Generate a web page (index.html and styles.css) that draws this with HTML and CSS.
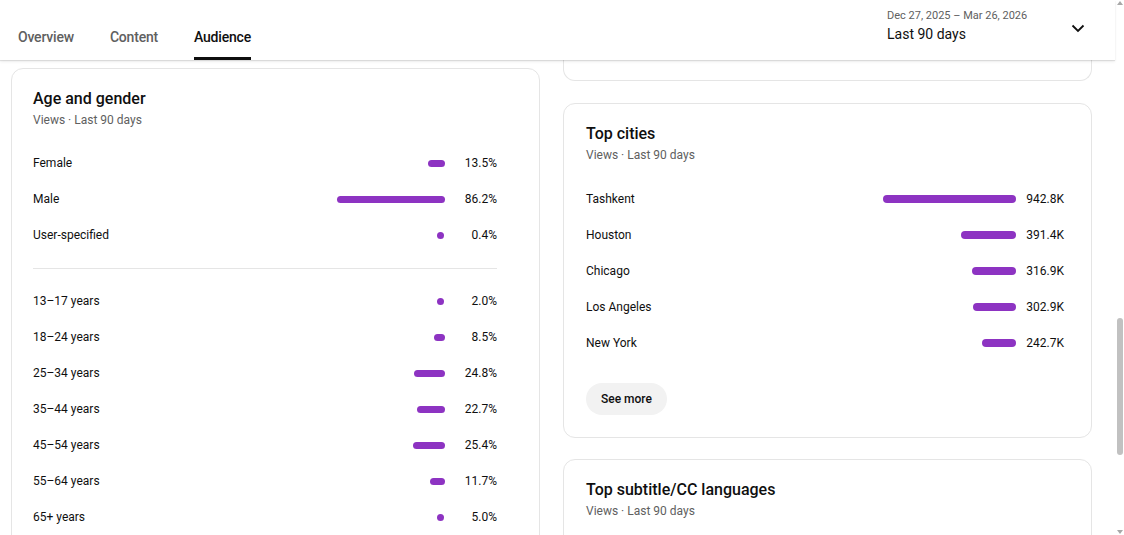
FILE: index.html
```html
<!DOCTYPE html>
<html lang="en">
<head>
<meta charset="utf-8">
<title>Audience</title>
<link rel="stylesheet" href="styles.css">
</head>
<body>
<div class="app">
  <header class="header">
    <nav class="tabs">
      <div class="tab">Overview</div>
      <div class="tab">Content</div>
      <div class="tab active">Audience</div>
    </nav>
    <div class="range">
      <div class="range-text">
        <div class="range-dates">Dec 27, 2025 – Mar 26, 2026</div>
        <div class="range-label">Last 90 days</div>
      </div>
      <svg class="chevron" width="24" height="24" viewBox="0 0 24 24"><path d="M6.5 9.5 12 15l5.5-5.5" fill="none" stroke="#0f0f0f" stroke-width="1.8"/></svg>
    </div>
  </header>

  <main class="main">
    <section class="col">
      <div class="card card-left">
        <h2 class="card-title">Age and gender</h2>
        <div class="card-sub">Views · Last 90 days</div>
        <div class="rows">
          <div class="row"><span class="label">Female</span><span class="bar-wrap"><span class="bar" style="width:17px"></span></span><span class="value">13.5%</span></div>
          <div class="row"><span class="label">Male</span><span class="bar-wrap"><span class="bar" style="width:108px"></span></span><span class="value">86.2%</span></div>
          <div class="row"><span class="label">User-specified</span><span class="bar-wrap"><span class="bar dot"></span></span><span class="value">0.4%</span></div>
        </div>
        <hr class="divider">
        <div class="rows rows-age">
          <div class="row"><span class="label">13–17 years</span><span class="bar-wrap"><span class="bar dot"></span></span><span class="value">2.0%</span></div>
          <div class="row"><span class="label">18–24 years</span><span class="bar-wrap"><span class="bar" style="width:11px"></span></span><span class="value">8.5%</span></div>
          <div class="row"><span class="label">25–34 years</span><span class="bar-wrap"><span class="bar" style="width:31px"></span></span><span class="value">24.8%</span></div>
          <div class="row"><span class="label">35–44 years</span><span class="bar-wrap"><span class="bar" style="width:28px"></span></span><span class="value">22.7%</span></div>
          <div class="row"><span class="label">45–54 years</span><span class="bar-wrap"><span class="bar" style="width:32px"></span></span><span class="value">25.4%</span></div>
          <div class="row"><span class="label">55–64 years</span><span class="bar-wrap"><span class="bar" style="width:15px"></span></span><span class="value">11.7%</span></div>
          <div class="row"><span class="label">65+ years</span><span class="bar-wrap"><span class="bar dot"></span></span><span class="value">5.0%</span></div>
        </div>
      </div>
    </section>

    <section class="col">
      <div class="card-stub"></div>
      <div class="card card-right">
        <h2 class="card-title">Top cities</h2>
        <div class="card-sub">Views · Last 90 days</div>
        <div class="rows rows-cities">
          <div class="row"><span class="label">Tashkent</span><span class="bar-wrap"><span class="bar thick" style="width:133px"></span></span><span class="value value-k">942.8K</span></div>
          <div class="row"><span class="label">Houston</span><span class="bar-wrap"><span class="bar thick" style="width:55px"></span></span><span class="value value-k">391.4K</span></div>
          <div class="row"><span class="label">Chicago</span><span class="bar-wrap"><span class="bar thick" style="width:44px"></span></span><span class="value value-k">316.9K</span></div>
          <div class="row"><span class="label">Los Angeles</span><span class="bar-wrap"><span class="bar thick" style="width:43px"></span></span><span class="value value-k">302.9K</span></div>
          <div class="row"><span class="label">New York</span><span class="bar-wrap"><span class="bar thick" style="width:34px"></span></span><span class="value value-k">242.7K</span></div>
        </div>
        <button class="see-more">See more</button>
      </div>
      <div class="card card-right card-lang">
        <h2 class="card-title">Top subtitle/CC languages</h2>
        <div class="card-sub">Views · Last 90 days</div>
      </div>
    </section>
  </main>

  <div class="scrollbar">
    <span class="arrow-up"></span>
    <span class="thumb"></span>
    <span class="arrow-down"></span>
  </div>
</div>
</body>
</html>
```

FILE: styles.css
```css
* { box-sizing: border-box; }

html, body {
  margin: 0;
  padding: 0;
  background: #fff;
  overflow: hidden;
}

body {
  font-family: Roboto, "Noto Sans", Arial, sans-serif;
  color: #0f0f0f;
}

.app {
  position: relative;
  width: 1124px;
  height: 535px;
  overflow: hidden;
}

/* Header */
.header {
  position: relative;
  z-index: 2;
  width: 1115px;
  height: 60px;
  display: flex;
  justify-content: space-between;
  background: #fff;
  box-shadow: 0 1px 1px rgba(0, 0, 0, 0.10), 0 2px 3px rgba(0, 0, 0, 0.06);
}

.tabs {
  display: flex;
  gap: 36px;
  padding-left: 18px;
}

.tab {
  height: 60px;
  padding-top: 27px;
  border-bottom: 3px solid transparent;
  font-size: 14px;
  line-height: 20px;
  font-weight: 500;
  letter-spacing: -0.2px;
  color: #606060;
}

.tab.active {
  color: #0f0f0f;
  border-bottom-color: #0f0f0f;
}

.range {
  display: flex;
  align-items: flex-start;
  padding-right: 25px;
}

.range-text {
  width: 179px;
  padding-top: 9px;
}

.range-dates {
  font-size: 11px;
  line-height: 14px;
  color: #606060;
}

.range-label {
  margin-top: 1px;
  font-size: 14px;
  line-height: 20px;
  color: #0f0f0f;
}

.chevron {
  margin-top: 16px;
  display: block;
}

/* Main */
.main {
  display: grid;
  grid-template-columns: 529px 529px;
  gap: 23px;
  padding-left: 11px;
  height: 475px;
  overflow: hidden;
}

.col {
  display: flex;
  flex-direction: column;
}

.card {
  border: 1px solid #e5e5e5;
  border-radius: 12px;
  background: #fff;
  padding-top: 19px;
  padding-left: 21px;
}

.card-left {
  margin-top: 8px;
  padding-right: 42px;
  min-height: 500px;
}

.card-right {
  margin-top: 22px;
  padding-left: 22px;
  padding-right: 27px;
  padding-bottom: 22px;
}

.card-lang {
  margin-top: 21px;
  min-height: 120px;
}

.card-stub {
  height: 21px;
  border: 1px solid #e5e5e5;
  border-top: none;
  border-radius: 0 0 12px 12px;
}

.card-title {
  margin: 0;
  font-size: 16px;
  line-height: 22px;
  font-weight: 500;
  color: #0f0f0f;
}

.card-sub {
  margin-top: 2px;
  font-size: 12px;
  line-height: 16px;
  color: #606060;
}

.rows {
  margin-top: 17px;
  display: flex;
  flex-direction: column;
}

.rows-cities {
  margin-top: 18px;
}

.rows-age {
  margin-top: 14px;
}

.row {
  height: 36px;
  display: flex;
  align-items: center;
  font-size: 12px;
  line-height: 16px;
}

.label {
  flex: 1;
  color: #0f0f0f;
}

.bar-wrap {
  display: flex;
  justify-content: flex-end;
  align-items: center;
}

.bar {
  display: block;
  height: 7px;
  border-radius: 4px;
  background: #8d33c2;
}

.bar.thick {
  height: 8px;
}

.bar.dot {
  width: 7px;
  margin-right: 1px;
}

.value {
  width: 52px;
  text-align: right;
  color: #0f0f0f;
}

.value.value-k {
  width: 48px;
}

.divider {
  margin: 15px 0 0;
  border: none;
  border-top: 1px solid #e5e5e5;
  height: 0;
}

.see-more {
  margin-top: 22px;
  height: 32px;
  padding: 0 15px;
  border: none;
  border-radius: 16px;
  background: #f2f2f2;
  font-family: Roboto, "Noto Sans", Arial, sans-serif;
  font-size: 12px;
  font-weight: 500;
  color: #0f0f0f;
  cursor: pointer;
}

/* Scrollbar overlay */
.scrollbar {
  position: absolute;
  top: 0;
  right: 0;
  width: 10px;
  height: 535px;
}

.thumb {
  position: absolute;
  left: 3px;
  top: 318px;
  width: 6px;
  height: 137px;
  border-radius: 3px;
  background: #c1c1c1;
}

.arrow-up,
.arrow-down {
  position: absolute;
  left: 3px;
  width: 0;
  height: 0;
  border-left: 3px solid transparent;
  border-right: 3px solid transparent;
}

.arrow-up {
  top: 1px;
  border-bottom: 4px solid #a8a8a8;
}

.arrow-down {
  bottom: 1px;
  border-top: 4px solid #a8a8a8;
}
```
